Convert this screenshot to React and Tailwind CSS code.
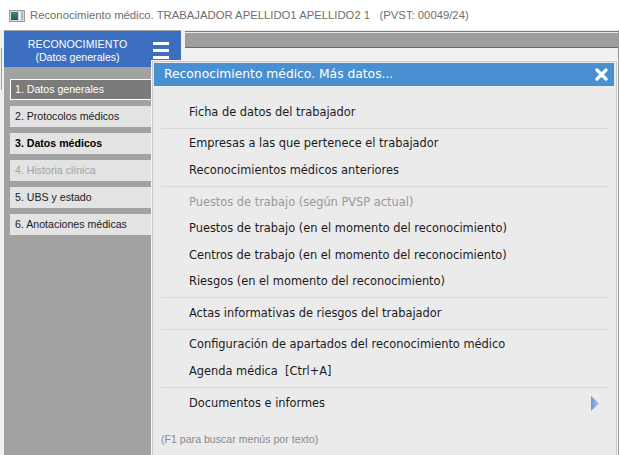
import React from 'react';

const sideItems = [
  { label: '1. Datos generales', kind: 'active' },
  { label: '2. Protocolos médicos', kind: 'normal' },
  { label: '3. Datos médicos', kind: 'bold' },
  { label: '4. Historia clínica', kind: 'disabled' },
  { label: '5. UBS y estado', kind: 'normal' },
  { label: '6. Anotaciones médicas', kind: 'normal' },
];

// groups of the "más datos" menu, separated by a thin line
const menuGroups = [
  [{ label: 'Ficha de datos del trabajador' }],
  [{ label: 'Empresas a las que pertenece el trabajador' }, { label: 'Reconocimientos médicos anteriores' }],
  [
    { label: 'Puestos de trabajo (según PVSP actual)', disabled: true },
    { label: 'Puestos de trabajo (en el momento del reconocimiento)' },
    { label: 'Centros de trabajo (en el momento del reconocimiento)' },
    { label: 'Riesgos (en el momento del reconocimiento)' },
  ],
  [{ label: 'Actas informativas de riesgos del trabajador' }],
  [{ label: 'Configuración de apartados del reconocimiento médico' }, { label: 'Agenda médica\u00a0\u00a0[Ctrl+A]' }],
  [{ label: 'Documentos e informes', submenu: true }],
];

const sideItemClass = {
  active: 'bg-[#7a7a7a] text-white outline outline-1 outline-white -outline-offset-1',
  normal: 'bg-[#e3e3e3] text-[#1a1a1a]',
  bold: 'bg-[#e3e3e3] text-black font-bold',
  disabled: 'bg-[#e3e3e3] text-[#a2a2a2]',
};

const WindowIcon = () => (
  <svg width="16" height="12" viewBox="0 0 16 12">
    <defs>
      <linearGradient id="teal" x1="0" y1="0" x2="0" y2="1">
        <stop offset="0" stopColor="#3f8a78" />
        <stop offset="1" stopColor="#1f5a55" />
      </linearGradient>
    </defs>
    <rect x="0.5" y="0.5" width="15" height="11" fill="#d8d8d8" stroke="#9a9a9a" />
    <rect x="2" y="2" width="7" height="8" fill="url(#teal)" />
    <rect x="10" y="2" width="1.5" height="8" fill="#ffffff" />
    <rect x="12" y="2" width="2" height="8" fill="#b5b5b5" />
  </svg>
);

const MenuRow = ({ item }) => (
  <div
    className={`flex h-[26.6px] items-center justify-between pl-[36px] pr-[17px] text-[11.4px] ${
      item.disabled ? 'text-[#9a9a9a]' : 'text-[#1b1b1b]'
    }`}
  >
    <span>{item.label}</span>
    {item.submenu ? (
      <svg width="8" height="15" viewBox="0 0 8 15">
        <defs>
          <linearGradient id="tri" x1="0" y1="0" x2="1" y2="0">
            <stop offset="0" stopColor="#6f94db" />
            <stop offset="1" stopColor="#a9c0ee" />
          </linearGradient>
        </defs>
        <polygon points="0,0 8,7.5 0,15" fill="url(#tri)" />
      </svg>
    ) : null}
  </div>
);

export default function App() {
  return (
    <div className="relative h-[455px] w-[619px] overflow-hidden bg-[#f0f0f0] font-['Liberation_Sans',Arial,sans-serif]">
      <div className="flex h-[30px] items-center gap-[5px] bg-white pl-[9px] pt-[1px] text-[11.3px] text-[#6e6e6e]">
        <WindowIcon />
        <span className="whitespace-pre">Reconocimiento médico. TRABAJADOR APELLIDO1 APELLIDO2 1   (PVST: 00049/24)</span>
      </div>

      <div className="flex h-[425px] border-r border-[#9a9a9a]">
        <div className="flex w-[4px] flex-col bg-[#f0f0f0]">
          <div className="ml-[1px] mt-[18px] h-[42px] w-[1px] bg-[#8fa6c8]" />
        </div>

        <aside className="flex w-[177px] flex-col bg-[#a2a2a2]">
          <div className="relative mt-[1px] flex h-[36px] flex-col items-center justify-center bg-[#3c6fbf] pr-[30px] pt-[4px] text-white">
            <span className="text-[10.6px] leading-[13px] tracking-[0.1px]">RECONOCIMIENTO</span>
            <span className="text-[10.6px] leading-[13px]">(Datos generales)</span>
            <div className="absolute right-[12px] top-[11px] flex flex-col gap-[4px]">
              <div className="h-[3px] w-[16px] bg-white" />
              <div className="h-[3px] w-[16px] bg-white" />
              <div className="h-[3px] w-[16px] bg-white" />
            </div>
          </div>
          <nav className="flex flex-col gap-[6px] pl-[6px] pr-[4px] pt-[12px]">
            {sideItems.map((item) => (
              <div
                key={item.label}
                className={`flex h-[21px] items-center pl-[5px] text-[10.6px] ${sideItemClass[item.kind]}`}
              >
                {item.label}
              </div>
            ))}
          </nav>
        </aside>

        <section className="flex flex-1 flex-col pl-[4px] pt-[1px]">
          <div className="h-[1px] bg-[#7a7a7a]" />
          <div className="h-[1px] bg-[#e8e8e8]" />
          <div className="h-[15px] border-b border-[#6a6a6a] bg-[#9e9e9e]" />
        </section>
      </div>

      {/* Más datos popup */}
      <div className="absolute left-[152px] top-[61px] h-[400px] w-[465px] border border-[#c9c9c9] bg-[#ebebeb] font-['DejaVu_Sans',Verdana,sans-serif] shadow-[0_0_0_1px_#f7f7f7]">
        <div className="mx-[1px] mt-[1px] mr-[2px] flex h-[23px] items-center justify-between bg-[#4a8fd0] pl-[10px] pr-[6px] text-[12.3px] text-white">
          <span>Reconocimiento médico. Más datos...</span>
          <svg width="13" height="13" viewBox="0 0 13 13">
            <path d="M2 2 L11 11 M11 2 L2 11" stroke="white" strokeWidth="3.2" strokeLinecap="round" />
          </svg>
        </div>
        <div className="pt-[13px]">
          {menuGroups.map((group, gi) => (
            <div key={gi}>
              {gi > 0 ? <div className="my-[2px] ml-[8px] mr-[8px] h-[1px] bg-[#d9d9d9]" /> : null}
              {group.map((item) => (
                <MenuRow key={item.label} item={item} />
              ))}
            </div>
          ))}
        </div>
        <div className="mt-[15px] pl-[8px] font-['Liberation_Sans',Arial,sans-serif] text-[10.6px] text-[#8a8a8a]">
          (F1 para buscar menús por texto)
        </div>
      </div>
    </div>
  );
}
